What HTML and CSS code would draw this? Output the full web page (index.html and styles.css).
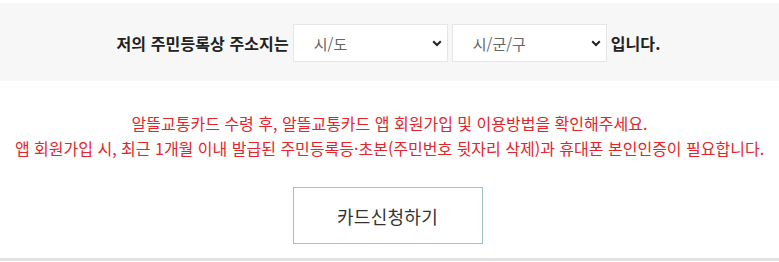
FILE: index.html
```html
<!DOCTYPE html>
<html lang="ko">
<head>
<meta charset="utf-8">
<link rel="stylesheet" href="styles.css">
</head>
<body>
<div class="page">
  <div class="addr-band">
    <div class="addr-row">
      <span class="label">저의 주민등록상 주소지는</span>
      <div class="sel-wrap">
        <select class="sel"><option>시/도</option></select>
        <svg class="chev" width="10" height="7" viewBox="0 0 10 7"><path d="M1.2 1.2 L5 5 L8.8 1.2" fill="none" stroke="#222" stroke-width="2"/></svg>
      </div>
      <div class="sel-wrap">
        <select class="sel"><option>시/군/구</option></select>
        <svg class="chev" width="10" height="7" viewBox="0 0 10 7"><path d="M1.2 1.2 L5 5 L8.8 1.2" fill="none" stroke="#222" stroke-width="2"/></svg>
      </div>
      <span class="label">입니다.</span>
    </div>
  </div>
  <div class="notice">
    <p class="warn">알뜰교통카드 수령 후, 알뜰교통카드 앱 회원가입 및 이용방법을 확인해주세요.<br>앱 회원가입 시, 최근 1개월 이내 발급된 주민등록등·초본(주민번호 뒷자리 삭제)과 휴대폰 본인인증이 필요합니다.</p>
    <button class="apply">카드신청하기</button>
  </div>
  <div class="foot"></div>
</div>
</body>
</html>
```
FILE: styles.css
```css
html, body {
  margin: 0;
  padding: 0;
  background: #fff;
}
.page {
  font-family: "Noto Sans CJK KR", "Noto Sans", sans-serif;
  padding-top: 3px;
}
.addr-band {
  background: #f7f7f7;
  height: 78px;
  display: flex;
  align-items: center;
  justify-content: center;
}
.addr-row {
  display: flex;
  align-items: center;
  gap: 4px;
  margin-left: -2px;
  margin-top: 2px;
}
.label {
  font-size: 16px;
  font-weight: 700;
  color: #222;
  letter-spacing: 0.1px;
}
.sel-wrap {
  position: relative;
  width: 155px;
  height: 38px;
}
.sel {
  -webkit-appearance: none;
  appearance: none;
  width: 100%;
  height: 100%;
  box-sizing: border-box;
  border: 1px solid #e6e6e6;
  background: #fff;
  border-radius: 0;
  padding: 0 0 0 20px;
  font-family: "Noto Sans CJK KR", sans-serif;
  font-size: 15px;
  color: #666;
  outline: none;
}
.chev {
  position: absolute;
  right: 6px;
  top: 16px;
}
.notice {
  padding: 30px 0 14px;
  display: flex;
  flex-direction: column;
  align-items: center;
}
.warn {
  margin: 0;
  text-align: center;
  color: #e3242b;
  font-size: 16px;
  line-height: 25px;
  letter-spacing: 0;
}
.apply {
  margin-top: 26px;
  width: 190px;
  height: 57px;
  box-sizing: border-box;
  border: 1px solid #9dc3cc;
  background: #fff;
  font-family: "Noto Sans CJK KR", sans-serif;
  font-size: 18px;
  letter-spacing: 0.3px;
  color: #333;
  margin-left: -4px;
}
.foot {
  height: 3px;
  background: #e2e2e2;
}
```
